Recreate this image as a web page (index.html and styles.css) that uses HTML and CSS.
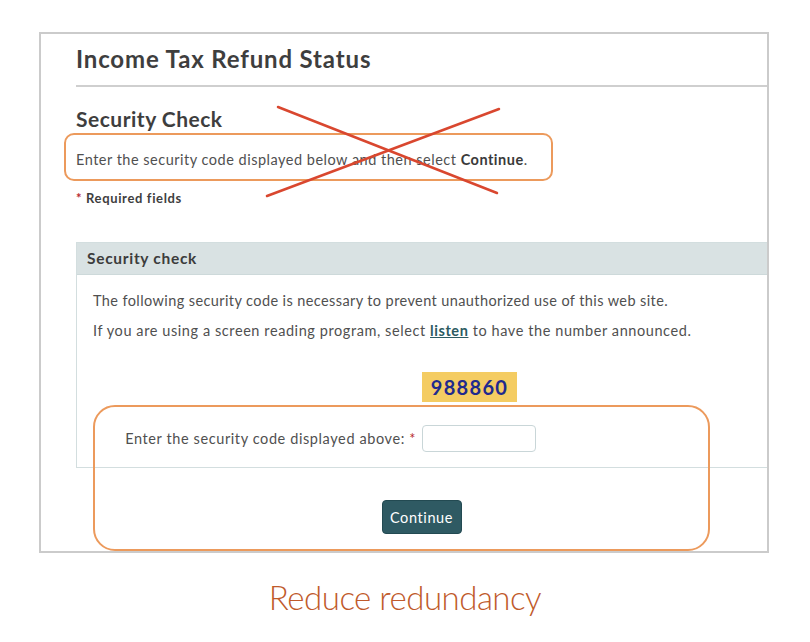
FILE: index.html
```html
<!DOCTYPE html>
<html lang="en">
<head>
<meta charset="utf-8">
<title>Income Tax Refund Status</title>
<link rel="stylesheet" href="styles.css">
</head>
<body>
<div class="frame">
  <div class="content">
    <h1 class="title">Income Tax Refund Status</h1>
    <hr class="rule">
    <h2 class="subtitle">Security Check</h2>
    <p class="intro">Enter the security code displayed below and then select <b>Continue</b>.</p>
    <p class="required"><span class="star">*</span> Required fields</p>

    <section class="panel">
      <div class="panel-head">Security check</div>
      <div class="panel-body">
        <p class="line">The following security code is necessary to prevent unauthorized use of this web site.</p>
        <p class="line line-wide">If you are using a screen reading program, select <a class="listen" href="#">listen</a> to have the number announced.</p>
        <div class="form-grid">
          <span></span>
          <div class="code">988860</div>
          <label class="label" for="code">Enter the security code displayed above: <span class="star">*</span></label>
          <input class="input" id="code" type="text">
        </div>
      </div>
    </section>

    <div class="actions">
      <button class="btn" type="button">Continue</button>
    </div>
  </div>

  <div class="mark mark-top"></div>
  <div class="mark mark-bottom"></div>
  <svg class="cross" width="245" height="100" viewBox="0 0 245 100">
    <line x1="18" y1="7" x2="237" y2="93" stroke="#d9472f" stroke-width="2.5" stroke-linecap="round"/>
    <line x1="7" y1="96" x2="239" y2="9" stroke="#d9472f" stroke-width="2.5" stroke-linecap="round"/>
  </svg>
</div>

<p class="caption">Reduce redundancy</p>
</body>
</html>
```

FILE: styles.css
```css
* { box-sizing: border-box; }

body {
  margin: 0;
  background: #ffffff;
  font-family: Lato, "Open Sans", sans-serif;
  color: #4a4a4a;
}

.frame {
  position: relative;
  margin: 32px 0 0 39px;
  width: 730px;
  height: 521px;
  border: 2px solid #cbcbcb;
  overflow: hidden;
  background: #fff;
}

.content {
  padding: 11px 0 0 35px;
}

.title {
  margin: 0;
  font-size: 24px;
  line-height: 28px;
  font-weight: 700;
  letter-spacing: 0.85px;
  color: #3e3e3e;
}

.rule {
  margin: 12px 0 0 0;
  border: 0;
  height: 2px;
  background: #cfcfcf;
}

.subtitle {
  margin: 19px 0 0 0;
  font-size: 21px;
  line-height: 26px;
  font-weight: 700;
  letter-spacing: 0.5px;
  color: #3e3e3e;
}

.intro {
  margin: 18px 0 0 0;
  font-size: 14.5px;
  line-height: 20px;
  letter-spacing: 0.5px;
  color: #505050;
}

.intro b { color: #3a3a3a; }

.required {
  margin: 19px 0 0 0;
  font-size: 13px;
  line-height: 18px;
  font-weight: 700;
  letter-spacing: 0.65px;
  color: #3e3e3e;
}

.star { color: #b8292f; }

.panel {
  margin: 35px -40px 0 0;
  border: 1px solid #d3dedf;
}

.panel-head {
  height: 32px;
  padding: 0 10px;
  background: #d9e2e3;
  border-bottom: 1px solid #cdd9da;
  font-size: 15.5px;
  font-weight: 700;
  line-height: 31px;
  letter-spacing: 0.7px;
  color: #3c3c3c;
}

.panel-body {
  padding: 11px 0 15px 16px;
}

.line {
  margin: 0;
  font-size: 14.5px;
  line-height: 30px;
  letter-spacing: 0.4px;
  color: #505050;
}

.line-wide {
  letter-spacing: 0.58px;
}

.listen {
  color: #2c5a62;
  font-weight: 700;
  text-decoration: underline;
}

.form-grid {
  display: grid;
  grid-template-columns: 323px auto;
  column-gap: 6px;
  row-gap: 23px;
  align-items: center;
  justify-items: start;
  margin-top: 26px;
}

.code {
  width: 95px;
  height: 30px;
  background: #f4cc62;
  color: #1f2a8e;
  font-size: 20px;
  font-weight: 700;
  line-height: 30px;
  text-align: center;
  letter-spacing: 1.3px;
}

.label {
  justify-self: end;
  font-size: 14.5px;
  letter-spacing: 0.6px;
  color: #505050;
}

.input {
  width: 114px;
  height: 27px;
  border: 1px solid #c9d6d8;
  border-radius: 4px;
  background: #fff;
}

.actions {
  margin-top: 32px;
  padding-left: 0;
  text-align: center;
}

.btn {
  width: 80px;
  height: 34px;
  border: 1px solid #234a52;
  border-radius: 4px;
  background: #2f5a63;
  color: #ffffff;
  font-family: Lato, "Open Sans", sans-serif;
  font-size: 14.5px;
  letter-spacing: 0.6px;
}

.mark {
  position: absolute;
  border: 2px solid #ec9a5c;
}

.mark-top {
  left: 23px;
  top: 99px;
  width: 489px;
  height: 48px;
  border-radius: 10px;
}

.mark-bottom {
  left: 52px;
  top: 371px;
  width: 617px;
  height: 146px;
  border-radius: 22px;
}

.cross {
  position: absolute;
  left: 219px;
  top: 66px;
}

.caption {
  margin: 24px 0 0 0;
  text-align: center;
  font-family: Lato, "Open Sans", sans-serif;
  font-weight: 300;
  font-size: 33px;
  line-height: 40px;
  color: #c05a2b;
  letter-spacing: -0.5px;
}
```
